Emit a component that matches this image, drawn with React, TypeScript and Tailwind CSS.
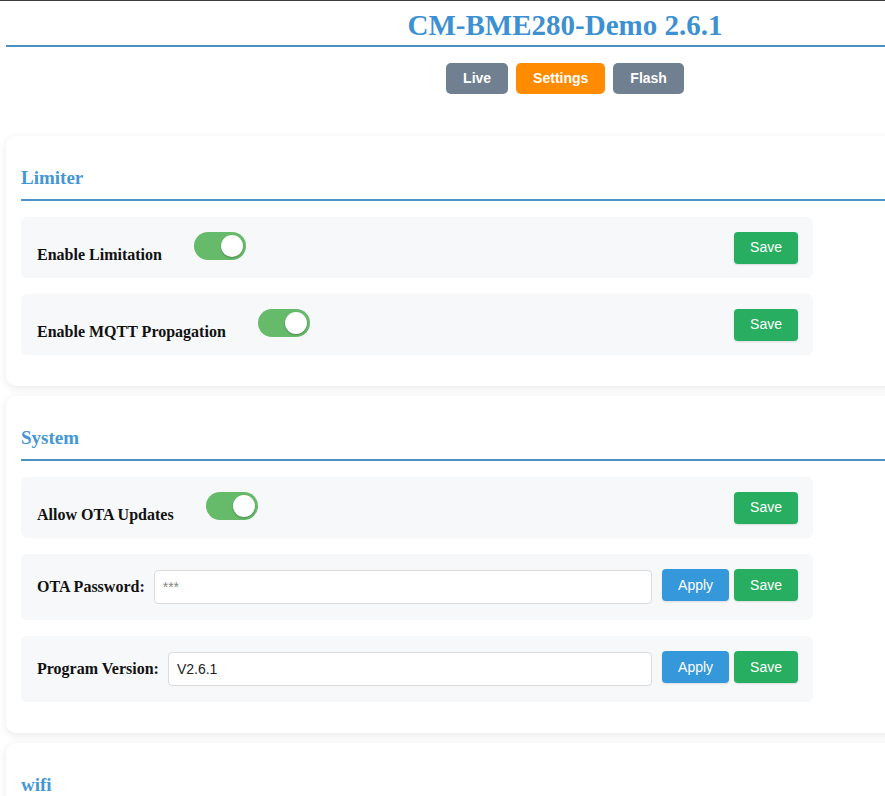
import { useState } from "react";

const serif = "font-['Liberation_Serif','Times_New_Roman',serif]";
const sans = "font-['Liberation_Sans',Arial,sans-serif]";

function Toggle({ on, onChange }: { on: boolean; onChange: () => void }) {
  return (
    <button
      onClick={onChange}
      className={`relative ml-[32px] mb-[3px] h-[28px] w-[52px] shrink-0 rounded-full transition-colors ${
        on ? "bg-[#66bb6a]" : "bg-[#ccc]"
      }`}
    >
      <span
        className={`absolute top-[3px] h-[22px] w-[22px] rounded-full bg-white shadow-[0_1px_2px_rgba(0,0,0,0.25)] transition-all ${
          on ? "left-[27px]" : "left-[3px]"
        }`}
      />
    </button>
  );
}

function SaveBtn({ lift = false }: { lift?: boolean }) {
  return (
    <button
      className={`${sans} h-[32px] rounded-[4px] bg-[#27ae60] px-4 text-[14px] text-white shadow-[0_1px_2px_rgba(0,0,0,0.12)] ${
        lift ? "mb-[4px]" : ""
      }`}
    >
      Save
    </button>
  );
}

function ApplyBtn() {
  return (
    <button className={`${sans} mr-[5px] mb-[4px] h-[32px] rounded-[4px] bg-[#3498db] px-4 text-[14px] text-white shadow-[0_1px_2px_rgba(0,0,0,0.12)]`}>
      Apply
    </button>
  );
}

function ToggleRow({ label, initial = true }: { label: string; initial?: boolean }) {
  const [on, setOn] = useState(initial);
  return (
    <div className="mb-4 flex h-[61px] w-[792px] items-center rounded-[6px] bg-[#f6f8fa] pl-4 pr-[15px]">
      <span className={`${serif} mt-[14px] text-[16px] font-bold text-[#111]`}>{label}</span>
      <Toggle on={on} onChange={() => setOn(!on)} />
      <div className="ml-auto">
        <SaveBtn />
      </div>
    </div>
  );
}

function InputRow({ label, value, placeholder }: { label: string; value?: string; placeholder?: string }) {
  const [text, setText] = useState(value ?? "");
  return (
    <div className="mb-4 flex h-[66px] w-[792px] items-center rounded-[6px] bg-[#f6f8fa] pl-4 pr-[15px]">
      <span className={`${serif} mr-[9px] whitespace-nowrap text-[16px] font-bold text-[#111]`}>{label}</span>
      <input
        value={text}
        placeholder={placeholder}
        onChange={(e) => setText(e.target.value)}
        className={`${sans} mr-[10px] h-[34px] min-w-0 flex-1 rounded-[4px] border border-[#dcdcdc] bg-white px-2 text-[14px] text-[#222] outline-none placeholder:text-[#888]`}
      />
      <ApplyBtn />
      <SaveBtn lift />
    </div>
  );
}

function Card({ title, children }: { title: string; children?: React.ReactNode }) {
  return (
    <section className="mb-[10px] rounded-[10px] bg-white px-[15px] pt-[30px] pb-[15px] shadow-[0_2px_8px_rgba(0,0,0,0.09)]">
      <h2 className={`${serif} mb-4 border-b-2 border-[#4a92c4] pt-px pb-[10px] text-[19px] leading-[22px] font-bold text-[#4597d3]`}>
        {title}
      </h2>
      {children}
    </section>
  );
}

export default function App() {
  const [tab, setTab] = useState("Settings");
  const tabs = ["Live", "Settings", "Flash"];

  return (
    <div className="min-h-screen w-full overflow-hidden border-t border-[#3a3a3a] bg-white">
      <div className="ml-[6px] w-[1118px]">
        <h1
          className={`${serif} mt-2 border-b-2 border-[#4a92c4] pb-[3px] text-center text-[29px] leading-[33px] font-bold text-[#3d90d1]`}
        >
          CM-BME280-Demo 2.6.1
        </h1>

        <nav className="mt-4 flex justify-center gap-2">
          {tabs.map((t) => (
            <button
              key={t}
              onClick={() => setTab(t)}
              className={`${sans} rounded-[5px] px-[17px] py-[7px] text-[14px] leading-[17px] font-bold text-white ${
                tab === t ? "bg-[#ff8c00]" : "bg-[#708090]"
              }`}
            >
              {t}
            </button>
          ))}
        </nav>

        <main className="mt-[42px]">
          <Card title="Limiter">
            <ToggleRow label="Enable Limitation" />
            <ToggleRow label="Enable MQTT Propagation" />
          </Card>

          <Card title="System">
            <ToggleRow label="Allow OTA Updates" />
            <InputRow label="OTA Password:" placeholder="***" />
            <InputRow label="Program Version:" value="V2.6.1" />
          </Card>

          <Card title="wifi" />
        </main>
      </div>
    </div>
  );
}
